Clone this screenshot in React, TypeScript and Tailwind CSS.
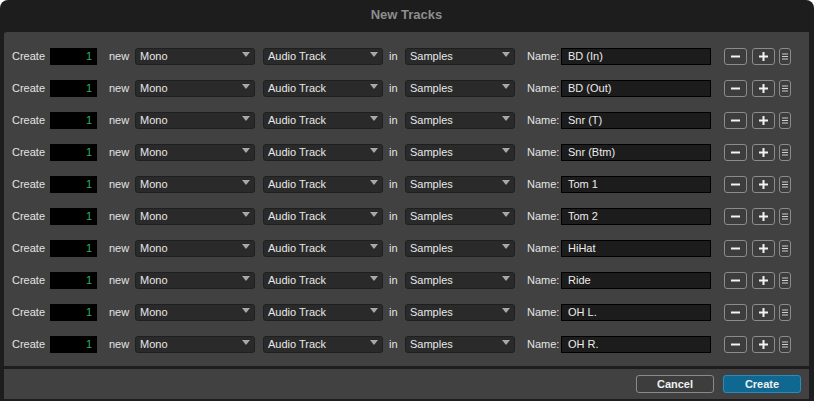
import { Fragment } from "react";

const names = [
  "BD (In)",
  "BD (Out)",
  "Snr (T)",
  "Snr (Btm)",
  "Tom 1",
  "Tom 2",
  "HiHat",
  "Ride",
  "OH L.",
  "OH R.",
];

function Select({ value, width }: { value: string; width: string }) {
  return (
    <div
      className={`relative flex h-[17px] shrink-0 items-center rounded-[3px] border border-[#1f1f1f] bg-[#2a2a2a] pl-[4px] text-[11px] text-[#e8e8e8] ${width}`}
    >
      {value}
      <svg
        className="absolute right-[4px] top-[3px]"
        width="8"
        height="5"
        viewBox="0 0 8 5"
        aria-hidden
      >
        <path d="M0 0h8L4 5z" fill="#a8a8a8" />
      </svg>
    </div>
  );
}

function SmallButton({ children, width }: { children: React.ReactNode; width: string }) {
  return (
    <div
      className={`flex h-[17px] shrink-0 items-center justify-center rounded-[3px] border border-[#8c8c8c] bg-[#3d3d3d] ${width}`}
    >
      {children}
    </div>
  );
}

function TrackRow({ name }: { name: string }) {
  return (
    <div className="flex h-[17px] items-center text-[11px] text-[#e4e4e4]">
      <span className="w-[38px] shrink-0">Create</span>
      <div className="flex h-[17px] w-[47px] shrink-0 items-center justify-end bg-black pr-[5px] text-[11px] text-[#2fb45c]">
        1
      </div>
      <span className="ml-[12px] w-[26px] shrink-0">new</span>
      <Select value="Mono" width="w-[120px]" />
      <Select value="Audio Track" width="ml-[8px] w-[120px]" />
      <span className="ml-[6px] w-[16px] shrink-0">in</span>
      <Select value="Samples" width="w-[110px]" />
      <span className="ml-[12px] w-[34px] shrink-0">Name:</span>
      <div className="flex h-[17px] w-[150px] shrink-0 items-center border border-black bg-[#1c1c1c] pl-[6px] text-[11px] text-[#ececec]">
        {name}
      </div>
      <div className="ml-[13px] flex items-center gap-[5px]">
        <SmallButton width="w-[23px]">
          <svg width="9" height="9" viewBox="0 0 9 9" aria-hidden>
            <path d="M0 3.5h9v2H0z" fill="#f2f2f2" />
          </svg>
        </SmallButton>
        <SmallButton width="w-[23px]">
          <svg width="9" height="9" viewBox="0 0 9 9" aria-hidden>
            <path d="M0 3.5h9v2H0z M3.5 0h2v9h-2z" fill="#f2f2f2" />
          </svg>
        </SmallButton>
      </div>
      <div className="ml-[4px]">
        <SmallButton width="w-[12px]">
          <svg width="6" height="7" viewBox="0 0 6 7" aria-hidden>
            <path d="M0 0.5h6v1H0z M0 3h6v1H0z M0 5.5h6v1H0z" fill="#cfcfcf" />
          </svg>
        </SmallButton>
      </div>
    </div>
  );
}

export default function App() {
  return (
    <div
      className="flex h-[401px] w-[814px] flex-col rounded-t-[8px] bg-[#1d1d1d] pl-[4px] pr-[5px]"
      style={{ fontFamily: '"Liberation Sans", Arial, sans-serif' }}
    >
      <div className="flex h-[32px] shrink-0 items-start justify-center pt-[5px] text-[13px] font-bold text-[#8d8d8d]">
        New Tracks
      </div>

      <div className="flex flex-col gap-[15px] rounded-tl-[3px] bg-[#414141] pb-[13px] pl-[8px] pt-[16px]">
        {names.map((n) => (
          <Fragment key={n}>
            <TrackRow name={n} />
          </Fragment>
        ))}
      </div>

      <div className="mt-[3px] flex h-[30px] items-center justify-end gap-[9px] bg-[#414141] pr-[8px]">
        <button className="h-[18px] w-[78px] rounded-[3px] border border-[#8a8a8a] bg-[#3d3d3d] text-[11px] font-bold text-[#f0f0f0]">
          Cancel
        </button>
        <button className="h-[18px] w-[78px] rounded-[3px] border border-[#2a8cbd] bg-[#0e6892] text-[11px] font-bold text-[#f0f0f0]">
          Create
        </button>
      </div>
    </div>
  );
}
